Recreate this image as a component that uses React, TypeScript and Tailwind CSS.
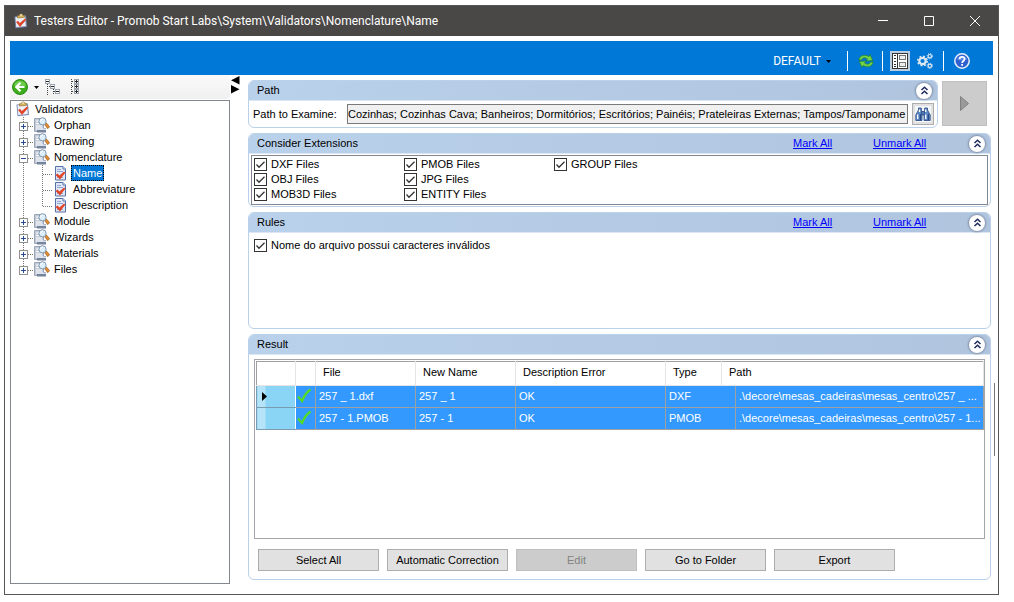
import { useState } from "react";
import type { ReactNode } from "react";

const extensions = [
  "DXF Files",
  "OBJ Files",
  "MOB3D Files",
  "PMOB Files",
  "JPG Files",
  "ENTITY Files",
  "GROUP Files",
];

const rules = ["Nome do arquivo possui caracteres inválidos"];

const validators = [
  { name: "Orphan" },
  { name: "Drawing" },
  { name: "Nomenclature", children: ["Name", "Abbreviature", "Description"] },
  { name: "Module" },
  { name: "Wizards" },
  { name: "Materials" },
  { name: "Files" },
];

const results = [
  {
    file: "257 _ 1.dxf",
    newName: "257 _ 1",
    error: "OK",
    type: "DXF",
    path: ".\\decore\\mesas_cadeiras\\mesas_centro\\257 _ ...",
  },
  {
    file: "257 - 1.PMOB",
    newName: "257 - 1",
    error: "OK",
    type: "PMOB",
    path: ".\\decore\\mesas_cadeiras\\mesas_centro\\257 - 1...",
  },
];

const actions = [
  { label: "Select All" },
  { label: "Automatic Correction" },
  { label: "Edit", disabled: true },
  { label: "Go to Folder" },
  { label: "Export" },
];

/* ---------- icons ---------- */

function ClipboardIcon() {
  return (
    <svg width="16" height="16" viewBox="0 0 16 16" className="shrink-0">
      <path d="M1.500 3.500L13 2.500l1 11.500-11.500 1.200z" fill="#7d8db5" />
      <path d="M2.500 4.300L12 3.500l.8 9.500-9.500.9z" fill="#eef1f9" />
      <path d="M4.500 5V2.800h1.600C6.300.4 9.700.4 9.900 2.400h1.600v2z" fill="#d9b45c" stroke="#96793a" strokeWidth=".7" />
      <circle cx="8" cy="2" r=".8" fill="#fff" />
      <path d="M3 9l2-1.300 1.800 2.300L12 5.500l1.300 1.200L7 14z" fill="#e0472a" />
    </svg>
  );
}

function FolderSearchIcon() {
  return (
    <svg width="16" height="16" viewBox="0 0 16 16" className="shrink-0">
      <path d="M.5 1.500h9v13h-9z" fill="#c3cad6" stroke="#9aa5b6" />
      <path d="M2 4h3M2 6.500h3M2 9h6" stroke="#fff" />
      <path d="M3 11h9v4.500H3z" fill="#75849c" />
      <path d="M2 10h6l1.500 1.500H12V13H2z" fill="#dde3ec" />
      <path d="M10.500 7.500l2-1.500 3.200 3.700-2 2z" fill="#e08a2e" stroke="#8a5222" strokeWidth=".6" />
      <circle cx="8.500" cy="4.300" r="3.600" fill="#dceefb" stroke="#8298b0" />
      <path d="M6.700 4.300a2 2 0 0 1 2-2" stroke="#fff" fill="none" />
    </svg>
  );
}

function DocumentCheckIcon() {
  return (
    <svg width="16" height="16" viewBox="0 0 16 16" className="shrink-0">
      <path d="M1.500 1.500h7.500l2.500 2.500v11h-10z" fill="#dfe8f8" stroke="#5470a6" />
      <path d="M9 1.500V4h2.500" fill="#fff" stroke="#5470a6" />
      <path d="M3 4.500h4M3 6.500h6M3 12.500h6" stroke="#93a7cc" />
      <path d="M1.500 10l2-1.500 2 2L10 6.500 11.500 7.500 6 14.500z" fill="#e0472a" />
    </svg>
  );
}

function BackIcon() {
  return (
    <svg width="16" height="16" viewBox="0 0 16 16">
      <circle cx="8" cy="8" r="7.500" fill="#3fae1c" stroke="#2f8a18" />
      <path d="M2 6.500a6.200 6.200 0 0 1 12 0c-4 2-8 2-12 0z" fill="#8edc6c" opacity=".6" />
      <path d="M12.500 8H5M8.500 3.800L4.300 8l4.200 4.200" stroke="#fff" strokeWidth="2.200" fill="none" />
    </svg>
  );
}

function TreeCollapseIcon() {
  return (
    <svg width="16" height="16" viewBox="0 0 16 16" shapeRendering="crispEdges" fill="none">
      <path d="M2.500 5v11M4 7.500h2M8.500 10v6M9 12.500h2" stroke="#444" strokeDasharray="1 1" />
      <path d="M.5.5h4v4h-4zM5.500 5.500h4v4h-4zM10.500 10.500h4v4h-4z" stroke="#9aa3ad" fill="#fff" />
      <path d="M1 2.500h3M6 7.500h3M11 12.500h3" stroke="#222" />
    </svg>
  );
}

function TreeExpandIcon() {
  return (
    <svg width="16" height="16" viewBox="0 0 16 16" shapeRendering="crispEdges" fill="none">
      <path d="M4.500 0v16M5 2.500h3M5 7.500h3M5 12.500h3" stroke="#444" strokeDasharray="1 1" />
      <path d="M7.500.5h4v4h-4zM7.500 5.500h4v4h-4zM7.500 10.500h4v4h-4z" stroke="#9aa3ad" fill="#fff" />
      <path d="M8 2.500h3M8 7.500h3M8 12.500h3M9.500 1v3M9.500 6v3M9.500 11v3" stroke="#222" />
    </svg>
  );
}

function RefreshIcon() {
  return (
    <svg width="16" height="16" viewBox="0 0 16 16" stroke="#237a1c" strokeWidth=".6" fill="#6fd04a">
      <path d="M.8 7C1.500 2.800 6 .8 11 3.500l1-2 2.800 6-6.500.6 1.200-2.100C7 4.200 4.500 4.500 3.500 7z" />
      <path d="M15.200 9c-.7 4.200-5.200 6.200-10.200 3.500l-1 2-2.800-6 6.500-.6-1.200 2.100c2.500 1.800 5 1.500 6-1z" />
    </svg>
  );
}

function PanelsIcon() {
  return (
    <svg width="16" height="16" viewBox="0 0 16 16" shapeRendering="crispEdges" fill="none">
      <path d="M.5.5h15v15H.5z" fill="#fff" stroke="#333" />
      <path d="M5.500 1v14" stroke="#333" />
      <path d="M2 2.500h2M2 5.500h2M2 8.500h2M2 11.500h2M2 13.500h2" stroke="#333" />
      <path d="M7.500 2.500h6v4h-6zM7.500 9.500h6v4h-6z" stroke="#777" fill="#eee" />
    </svg>
  );
}

function GearsIcon() {
  return (
    <svg width="16" height="16" viewBox="0 0 16 16" fill="none" stroke="#dfe8f2">
      <circle cx="5.500" cy="8" r="3.200" strokeWidth="2.200" />
      <circle cx="5.500" cy="8" r="4.700" strokeWidth="1.600" strokeDasharray="1.850 1.840" />
      <circle cx="12.800" cy="3.200" r="1.700" strokeWidth="1.200" />
      <circle cx="12.800" cy="3.200" r="2.700" strokeWidth="1" strokeDasharray="1.060 1.060" />
      <circle cx="12.800" cy="12.800" r="1.700" strokeWidth="1.200" />
      <circle cx="12.800" cy="12.800" r="2.700" strokeWidth="1" strokeDasharray="1.060 1.060" />
    </svg>
  );
}

function HelpIcon() {
  return (
    <svg width="16" height="16" viewBox="0 0 16 16" fill="none">
      <circle cx="8" cy="8" r="7.200" fill="#2f62cf" stroke="#e8effb" strokeWidth="1.500" />
      <path d="M3 6.500a5.200 5.200 0 0 1 10 0c-3 1.500-7 1.500-10 0z" fill="#6f9af0" opacity=".6" />
      <path d="M5.600 6.300c0-3.200 5-3.200 5-.2C10.600 8 8.100 7.900 8.100 9.900" stroke="#fff" strokeWidth="1.800" />
      <path d="M7.200 11h1.800v1.700H7.200z" fill="#fff" />
    </svg>
  );
}

function BinocularsIcon() {
  return (
    <svg width="16" height="16" viewBox="0 0 16 16" className="bg-[#f4f6fa]">
      <g stroke="#23457f" strokeWidth=".8" fill="#5f8ac8">
        <path d="M3.500 4V2h2.800v2l.7 3v7.500H.8V9z" />
        <path d="M9.700 4V2h2.800v2l2.700 5v5.500H9V7z" />
        <path d="M6.800 5.500h2.400v3.500H6.800z" />
      </g>
      <path d="M2.600 8.500V13M10.700 8.500V13M4.500 3.500V6M10.700 3.500V6" stroke="#fff" strokeWidth="1.300" />
      <path d="M5.300 8v6M13.300 8v6" stroke="#23457f" strokeWidth="1.300" />
    </svg>
  );
}

function CheckIcon() {
  return (
    <svg width="16" height="16" viewBox="0 0 16 16" className="block">
      <path d="M2 8.500L6 13C8 8 11 4 14.500 1.500" fill="none" stroke="#55dc22" strokeWidth="2.200" />
    </svg>
  );
}

function DownArrow() {
  return (
    <svg width="5" height="3" viewBox="0 0 5 3">
      <path d="M0 0h5L2.500 3z" fill="#000" />
    </svg>
  );
}

/* ---------- shared controls ---------- */

function CollapseButton({ label }: { label: string }) {
  return (
    <button
      aria-label={`Collapse ${label}`}
      className="flex size-4 items-center justify-center rounded-full bg-white shadow-[0_0_2px_1px_#7f8ea6]"
    >
      <svg width="9" height="9" viewBox="0 0 9 9" fill="none" stroke="#1e2a5c" strokeWidth="1.500">
        <path d="M1.500 4L4.500 1.200 7.500 4M1.500 8L4.500 5.200 7.500 8" />
      </svg>
    </button>
  );
}

type PanelProps = {
  title: string;
  className: string;
  onMark?: (value: boolean) => void;
  children: ReactNode;
};

function Panel({ title, className, onMark, children }: PanelProps) {
  return (
    <section className={`flex flex-col rounded-[6px] border border-[#b9d1ea] bg-white ${className}`}>
      <header className="flex h-5 shrink-0 items-center rounded-t-[5px] border-b border-[#dbe7f5] bg-linear-to-r from-[#b9d1ea] to-[#b0c4de] pr-[5px] pl-2">
        <h2 className="flex-1">{title}</h2>
        {onMark && (
          <div className="mr-10 flex gap-10 text-[#0000ff] underline">
            <a href="#mark" className="w-10" onClick={() => onMark(true)}>
              Mark All
            </a>
            <a href="#unmark" className="w-14" onClick={() => onMark(false)}>
              Unmark All
            </a>
          </div>
        )}
        <CollapseButton label={title} />
      </header>
      {children}
    </section>
  );
}

type CheckItemProps = {
  label: string;
  checked: boolean;
  onChange: () => void;
};

function CheckItem({ label, checked, onChange }: CheckItemProps) {
  return (
    <label className="flex h-[15px] items-center gap-1 whitespace-nowrap">
      <span className="relative size-[13px]">
        <input
          type="checkbox"
          checked={checked}
          onChange={onChange}
          className="block size-[13px] appearance-none border border-[#333] bg-white"
        />
        {checked && (
          <svg viewBox="0 0 13 13" className="pointer-events-none absolute inset-0">
            <path d="M2.500 6.500L5 9.200 10.500 3.700" fill="none" stroke="#333" strokeWidth="1.300" />
          </svg>
        )}
      </span>
      {label}
    </label>
  );
}

/* ---------- tree ---------- */

function Expander({ open, last }: { open: boolean; last: boolean }) {
  return (
    <button aria-label={open ? "Collapse" : "Expand"} className="shrink-0">
      <svg width="23" height="16" viewBox="0 0 23 16" shapeRendering="crispEdges" fill="none">
        <path d={last ? "M12.500 0v9" : "M12.500 0v16"} stroke="#777" strokeDasharray="1 1" />
        <path d="M17 9.500h6" stroke="#777" strokeDasharray="1 1" />
        <path d="M8.500 5.500h8v8h-8z" fill="#fff" stroke="#919191" />
        <path d="M10 9.500h5" stroke="#2a4b9b" />
        {!open && <path d="M12.500 7v5" stroke="#2a4b9b" />}
      </svg>
    </button>
  );
}

function LeafGutter({ last }: { last: boolean }) {
  return (
    <svg
      width="43"
      height="16"
      viewBox="0 0 43 16"
      shapeRendering="crispEdges"
      fill="none"
      className="shrink-0"
    >
      <path d="M12.500 0v16" stroke="#777" strokeDasharray="1 1" />
      <path d={last ? "M31.500 0v9" : "M31.500 0v16"} stroke="#777" strokeDasharray="1 1" />
      <path d="M32 9.500h10" stroke="#777" strokeDasharray="1 1" />
    </svg>
  );
}

function ValidatorTree() {
  const [selected, setSelected] = useState("Name");

  return (
    <nav className="flex-1 border border-[#828790] bg-white">
      <div className="flex h-4 items-center gap-1 pl-1">
        <ClipboardIcon />
        Validators
      </div>
      <ul>
        {validators.map((group, i) => (
          <li key={group.name}>
            <div className="flex h-4 items-center">
              <Expander open={!!group.children} last={i === validators.length - 1} />
              <FolderSearchIcon />
              <span className="pl-1">{group.name}</span>
            </div>
            {group.children && (
              <ul>
                {group.children.map((name, j) => (
                  <li key={name} className="flex h-4 items-center">
                    <LeafGutter last={j === group.children.length - 1} />
                    <DocumentCheckIcon />
                    <button
                      onClick={() => setSelected(name)}
                      className={`ml-px h-4 border border-dotted px-px leading-[14px] ${
                        selected === name
                          ? "border-black bg-[#0078d7] text-white"
                          : "border-transparent"
                      }`}
                    >
                      {name}
                    </button>
                  </li>
                ))}
              </ul>
            )}
          </li>
        ))}
      </ul>
    </nav>
  );
}

/* ---------- sections ---------- */

function TitleBar() {
  return (
    <div className="flex h-[30px] shrink-0 items-center bg-[#4a4846] pl-2 font-[Roboto,sans-serif] text-[12px] text-white">
      <ClipboardIcon />
      <h1 className="flex-1 pl-[5px]">
        Testers Editor - Promob Start Labs\System\Validators\Nomenclature\Name
      </h1>
      <div className="flex h-full">
        <button aria-label="Minimize" className="flex w-[46px] items-center justify-center">
          <svg width="10" height="10" viewBox="0 0 10 10" stroke="#fff">
            <path d="M0 4.500h10" />
          </svg>
        </button>
        <button aria-label="Maximize" className="flex w-[46px] items-center justify-center">
          <svg width="10" height="10" viewBox="0 0 10 10" stroke="#fff" fill="none">
            <path d="M.5.5h9v9h-9z" />
          </svg>
        </button>
        <button aria-label="Close" className="flex w-[46px] items-center justify-center">
          <svg width="10" height="10" viewBox="0 0 10 10" stroke="#fff">
            <path d="M0 0l10 10M10 0L0 10" />
          </svg>
        </button>
      </div>
    </div>
  );
}

function Toolbar() {
  return (
    <div className="mx-[5px] mt-[5px] flex h-[34px] shrink-0 items-center justify-end bg-[#0078d7] pt-[6px] pr-[23px]">
      <button className="flex items-center gap-[5px] font-[Roboto,sans-serif] text-[12px] text-white">
        DEFAULT
        <DownArrow />
      </button>
      <span className="ml-4 h-5 w-px bg-white" />
      <button aria-label="Refresh" className="mr-2 ml-[10px]">
        <RefreshIcon />
      </button>
      <span className="h-5 w-px bg-white" />
      <button
        aria-label="Toggle panels"
        className="ml-[7px] flex size-5 items-center justify-center bg-[#bccde0]"
      >
        <PanelsIcon />
      </button>
      <button aria-label="Settings" className="mx-[7px]">
        <GearsIcon />
      </button>
      <span className="mx-[3px] h-5 w-px bg-white" />
      <button aria-label="Help" className="ml-[7px]">
        <HelpIcon />
      </button>
    </div>
  );
}

function Sidebar() {
  return (
    <aside className="flex w-[220px] shrink-0 flex-col">
      <div className="flex h-6 items-center rounded-br-sm bg-linear-to-b from-[#fafafa] to-[#f0f0f0] pl-[2px]">
        <button aria-label="Back">
          <BackIcon />
        </button>
        <button aria-label="History" className="mx-[6px]">
          <DownArrow />
        </button>
        <button aria-label="Collapse all">
          <TreeCollapseIcon />
        </button>
        <button aria-label="Expand all" className="ml-[6px]">
          <TreeExpandIcon />
        </button>
      </div>
      <div className="mt-px flex flex-1 flex-col">
        <ValidatorTree />
      </div>
    </aside>
  );
}

function ResultTable() {
  return (
    <div className="mx-[5px] mt-1 flex-1 border border-[#a5a5a8] pt-px pl-px">
      <table className="w-full table-fixed border-collapse text-left">
        <colgroup>
          <col className="w-[39px]" />
          <col className="w-[20px]" />
          <col className="w-[100px]" />
          <col className="w-[100px]" />
          <col className="w-[150px]" />
          <col className="w-[56px]" />
          <col className="w-[14px]" />
          <col />
        </colgroup>
        <thead>
          <tr className="h-[24px] border-t border-l border-[#a0a0a0] [&>th]:border-r [&>th]:border-b [&>th]:border-[#e5e5e5] [&>th]:pb-[3px] [&>th]:pl-[7px] [&>th]:font-normal">
            <th />
            <th />
            <th>File</th>
            <th>New Name</th>
            <th>Description Error</th>
            <th>Type</th>
            <th colSpan={2}>Path</th>
          </tr>
        </thead>
        <tbody>
          {results.map((row, i) => (
            <tr
              key={row.file}
              className="h-[22px] bg-[#3399ff] text-white [&>td]:border [&>td]:border-[#a0a0a0] [&>td]:pb-px [&>td]:pl-[3px] [&>td]:whitespace-nowrap"
            >
              <th className="border border-[#7a9bb0] border-r-white bg-linear-to-r from-[#b5e3f7] from-20% to-[#8ad4f6] to-20% pl-[5px]">
                {i === 0 && (
                  <svg width="5" height="9" viewBox="0 0 5 9">
                    <path d="M0 0v9l5-4.500z" fill="#000" />
                  </svg>
                )}
              </th>
              <td className="!pl-0">
                <CheckIcon />
              </td>
              <td>{row.file}</td>
              <td>{row.newName}</td>
              <td>{row.error}</td>
              <td colSpan={2}>{row.type}</td>
              <td>{row.path}</td>
            </tr>
          ))}
        </tbody>
      </table>
    </div>
  );
}

export default function App() {
  const [marked, setMarked] = useState(extensions);
  const [markedRules, setMarkedRules] = useState(rules);

  const toggle = (list: string[], item: string) =>
    list.includes(item) ? list.filter((x) => x !== item) : [...list, item];

  return (
    <div className="flex min-h-screen bg-white pt-[5px] pr-[15px] pb-[7px] pl-1 font-['Liberation_Sans',Arial,sans-serif] text-[11px] leading-[13px] text-black">
      <div className="flex flex-1 flex-col border border-[#555]">
        <TitleBar />
        <Toolbar />
        <div className="flex flex-1 pl-[5px]">
          <div className="flex pb-[10px]">
            <Sidebar />
            <div className="flex w-[18px] flex-col pt-px pl-px">
              <svg width="9" height="18" viewBox="0 0 9 18">
                <path d="M8.500 0v8.500L0 4.200zM0 9v8.500l8.500-4.300z" fill="#000" />
              </svg>
            </div>
          </div>

          <main className="flex min-w-0 flex-1 flex-col gap-[5px] pt-[5px] pb-[14px]">
            <div className="flex items-start gap-1">
              <Panel title="Path" className="h-12 min-w-0 flex-1">
                <div className="flex flex-1 items-center gap-1 pr-[3px] pl-1">
                  <label htmlFor="path" className="w-[90px] shrink-0">
                    Path to Examine:
                  </label>
                  <input
                    id="path"
                    readOnly
                    className="h-5 min-w-0 flex-1 border border-[#7a7a7a] bg-[#f0f0f0]"
                    defaultValue="Cozinhas; Cozinhas Cava; Banheiros; Dormitórios; Escritórios; Painéis; Prateleiras Externas; Tampos/Tamponame"
                  />
                  <button
                    aria-label="Browse"
                    className="flex size-[22px] items-center justify-center border border-[#adadad] bg-[#e1e1e1]"
                  >
                    <BinocularsIcon />
                  </button>
                </div>
              </Panel>
              <button
                aria-label="Run"
                className="mt-px mr-1 flex size-[45px] items-center justify-center border border-[#bfbfbf] bg-[#ccc]"
              >
                <svg width="9" height="15" viewBox="0 0 9 15">
                  <path d="M.5.5v14l8-7z" fill="#9a9a9a" stroke="#808080" />
                </svg>
              </button>
            </div>

            <Panel
              title="Consider Extensions"
              className="h-[74px]"
              onMark={(value) => setMarked(value ? extensions : [])}
            >
              <div className="mx-[2px] mt-px mb-px flex-1 border border-[#828790] pt-px pl-[2px]">
                <div className="grid auto-cols-[150px] grid-flow-col grid-rows-3">
                  {extensions.map((name) => (
                    <CheckItem
                      key={name}
                      label={name}
                      checked={marked.includes(name)}
                      onChange={() => setMarked(toggle(marked, name))}
                    />
                  ))}
                </div>
              </div>
            </Panel>

            <Panel
              title="Rules"
              className="h-[117px]"
              onMark={(value) => setMarkedRules(value ? rules : [])}
            >
              <div className="pt-[5px] pl-[5px]">
                {rules.map((name) => (
                  <CheckItem
                    key={name}
                    label={name}
                    checked={markedRules.includes(name)}
                    onChange={() => setMarkedRules(toggle(markedRules, name))}
                  />
                ))}
              </div>
            </Panel>

            <Panel title="Result" className="flex-1">
              <ResultTable />
              <div className="flex gap-2 px-[9px] pt-[10px] pb-2">
                {actions.map((action) => (
                  <button
                    key={action.label}
                    disabled={action.disabled}
                    className="h-[22px] w-[121px] border border-[#adadad] bg-[#e1e1e1] disabled:border-[#bfbfbf] disabled:bg-[#ccc] disabled:text-[#838383]"
                  >
                    {action.label}
                  </button>
                ))}
              </div>
            </Panel>
          </main>

          {/* scroll thumb */}
          <div className="mt-[308px] mr-[3px] ml-[3px] h-[73px] w-px bg-[#777]" />
        </div>
      </div>
    </div>
  );
}
